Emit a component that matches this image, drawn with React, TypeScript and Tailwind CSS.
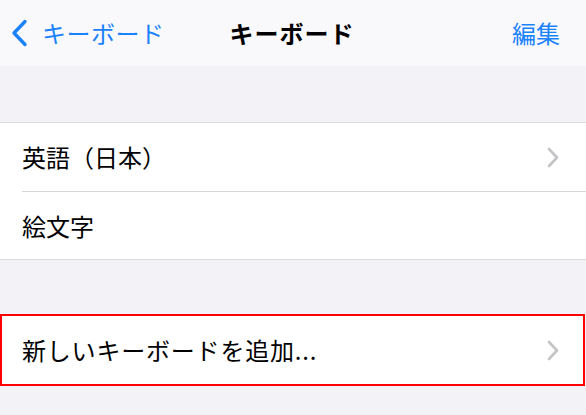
import React from "react";

const font = { fontFamily: '"Noto Sans CJK JP", "Noto Sans", sans-serif' };

function Chevron() {
  return (
    <svg width="12" height="21" viewBox="0 0 12 21" fill="none">
      <path d="M2 2 L10 10.5 L2 19" stroke="#c4c4c7" strokeWidth="2.6" strokeLinecap="round" strokeLinejoin="round" />
    </svg>
  );
}

export default function App() {
  return (
    <div className="w-[586px] h-[415px] overflow-hidden bg-[#f2f2f7] flex flex-col" style={font}>
      <div className="relative h-[66px] bg-[#f9f9fb] flex items-center shrink-0">
        <div className="flex items-center pl-[10px] text-[#1a82fb]">
          <svg width="18" height="28" viewBox="0 0 18 28" fill="none">
            <path d="M15 2.5 L4 14 L15 25.5" stroke="#1a82fb" strokeWidth="3.4" strokeLinecap="round" strokeLinejoin="round" />
          </svg>
          <span className="ml-[14px] text-[24px] leading-none tracking-[0.5px]">キーボード</span>
        </div>
        <div className="absolute left-0 right-0 top-0 bottom-0 flex items-center justify-center pointer-events-none">
          <span className="text-[24px] font-bold leading-none text-black tracking-[1px] ml-[-2px]">キーボード</span>
        </div>
        <div className="ml-auto pr-[26px] text-[24px] leading-none text-[#1a82fb]">編集</div>
      </div>
      <div className="h-[56px] shrink-0" />
      <div className="bg-white border-t border-b border-[#dcdcde] shrink-0">
        <div className="h-[68px] flex items-center pl-[22px] pr-[27px]">
          <span className="text-[24px] text-black leading-none">英語（日本）</span>
          <span className="ml-auto"><Chevron /></span>
        </div>
        <div className="ml-[22px] h-px bg-[#d6d6d8]" />
        <div className="h-[67px] flex items-center pl-[22px]">
          <span className="text-[24px] text-black leading-none">絵文字</span>
        </div>
      </div>
      <div className="h-[54px] shrink-0" />
      <div className="h-[72px] w-[585px] bg-white border-2 border-[#ff0000] flex items-center pl-[20px] pr-[24px] shrink-0">
        <span className="text-[24px] text-black leading-none tracking-[0.8px]">新しいキーボードを追加...</span>
        <span className="ml-auto"><Chevron /></span>
      </div>
    </div>
  );
}
